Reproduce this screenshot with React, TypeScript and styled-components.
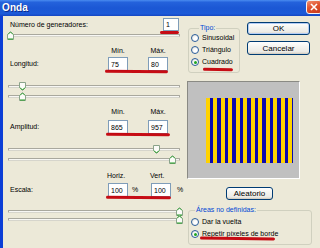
import React from "react";
import styled, { createGlobalStyle } from "styled-components";

const Global = createGlobalStyle`
  html, body { margin: 0; padding: 0; background: #ECE9D8; }
  body { font-family: "Liberation Sans", Arial, sans-serif; }
  * { box-sizing: border-box; }
`;

const Screen = styled.div`
  position: relative;
  width: 320px;
  height: 248px;
  overflow: hidden;
  display: flex;
  flex-direction: column;
  font-family: "Liberation Sans", Arial, sans-serif;
  font-size: 7px;
  color: #000;
  background: #ece9d8;
`;

const TitleBar = styled.div`
  flex: none;
  height: 16px;
  display: flex;
  align-items: flex-start;
  justify-content: space-between;
  padding-left: 2px;
  background: linear-gradient(180deg, #4a8cf0 0%, #2462dc 14%, #1b57d4 50%, #1c5ad8 85%, #1546c2 100%);
  color: #fff;
`;

const TitleText = styled.span`
  font-weight: bold;
  font-size: 10px;
  line-height: 15px;
  letter-spacing: 0.1px;
  text-shadow: 1px 1px 0 #0a2a8a;
`;

const CloseBtn = styled.div`
  width: 16px;
  height: 14px;
  margin-right: -2px;
  border: 1px solid #f4f4f4;
  border-radius: 3px;
  background: linear-gradient(160deg, #f09070 0%, #e0532e 45%, #c83a1c 100%);
  display: flex;
  align-items: center;
  justify-content: center;
`;

const Frame = styled.div`
  flex: 1;
  display: flex;
  border-left: 3px solid #0b3ed6;
  background: #ece9d8;
`;

const LeftCol = styled.div`
  width: 183px;
  flex: none;
  display: flex;
  flex-direction: column;
`;

const RightCol = styled.div`
  flex: 1;
  display: flex;
  flex-direction: column;
`;

const Label = styled.span`
  white-space: nowrap;
  line-height: 8px;
`;

const GenRow = styled.div`
  margin-top: 2px;
  width: 176px;
  height: 13px;
  padding-left: 7px;
  display: flex;
  align-items: center;
  justify-content: space-between;
`;

const Input = styled.div<{ $w: number }>`
  width: ${(p) => p.$w}px;
  height: 100%;
  background: #fff;
  border: 1px solid #7f9db9;
  padding-left: 2px;
  display: flex;
  align-items: center;
  font-size: 7px;
`;

const FieldGrid = styled.div<{ $cols: string; $mt: number; $h: number }>`
  margin-top: ${(p) => p.$mt}px;
  height: ${(p) => p.$h}px;
  display: grid;
  grid-template-columns: ${(p) => p.$cols};
  align-items: center;
`;

const HeadCell = styled.span<{ $align?: string }>`
  justify-self: ${(p) => p.$align || "center"};
  line-height: 8px;
  white-space: nowrap;
`;

const RowLabel = styled.span`
  padding-left: 7px;
  line-height: 8px;
`;

const SliderBox = styled.div<{ $h: number; $mt: number }>`
  position: relative;
  margin-top: ${(p) => p.$mt}px;
  margin-left: 5px;
  width: 172px;
  height: ${(p) => p.$h}px;
  display: flex;
  align-items: center;
`;

const Track = styled.div`
  flex: 1;
  height: 3px;
  border: 1px solid #a9a89e;
  border-bottom-color: #d6d5cc;
  background: #f7f7f4;
  border-radius: 1px;
`;

const ThumbWrap = styled.div`
  position: absolute;
  top: 50%;
  width: 7px;
  height: 9px;
  margin-top: -4.5px;
  margin-left: -3.5px;
  display: flex;
`;

const Thumb = ({ dir }: { dir: "up" | "down" }) => (
  <svg width="7" height="9" viewBox="0 0 7 9">
    {dir === "down" ? (
      <>
        <path d="M0.5 0.5H6.5V5.5L3.5 8.5L0.5 5.5Z" fill="#fbfbf8" stroke="#8aa38a" />
        <path d="M1 5.5L3.5 8L6 5.5" fill="none" stroke="#24a024" />
      </>
    ) : (
      <>
        <path d="M0.5 8.5H6.5V3.5L3.5 0.5L0.5 3.5Z" fill="#fbfbf8" stroke="#8aa38a" />
        <path d="M1 8H6" fill="none" stroke="#24a024" />
        <path d="M1 3.5L3.5 1L6 3.5" fill="none" stroke="#3da83d" />
      </>
    )}
  </svg>
);

const Slider = ({ h, mt, pos, dir }: { h: number; mt: number; pos: number; dir: "up" | "down" }) => (
  <SliderBox $h={h} $mt={mt}>
    <Track />
    <ThumbWrap style={{ left: pos }}>
      <Thumb dir={dir} />
    </ThumbWrap>
  </SliderBox>
);

const TopRow = styled.div`
  margin-top: 6px;
  display: flex;
  align-items: flex-start;
`;

const Group = styled.fieldset<{ $w: number; $ml: number; $mt: number }>`
  margin: ${(p) => p.$mt}px 0 0 ${(p) => p.$ml}px;
  width: ${(p) => p.$w}px;
  min-width: 0;
  padding: 0 3px 4px 2px;
  border: 1px solid #d0d0bf;
  border-radius: 3px;
  display: flex;
  flex-direction: column;
`;

const Legend = styled.legend<{ $ml: number }>`
  margin-left: ${(p) => p.$ml}px;
  padding: 0 1px;
  color: #0046d5;
  line-height: 8px;
  font-size: 7px;
  white-space: nowrap;
`;

const RadioRow = styled.div<{ $mt?: number }>`
  height: 12px;
  margin-top: ${(p) => p.$mt || 0}px;
  display: flex;
  align-items: center;
  gap: 3px;
  white-space: nowrap;
`;

const RadioDot = styled.span<{ $on?: boolean }>`
  flex: none;
  width: 8px;
  height: 8px;
  border-radius: 50%;
  border: 1px solid #2a5d9a;
  background: radial-gradient(circle at 65% 65%, #ffffff 30%, #dcdcd4 100%);
  display: flex;
  align-items: center;
  justify-content: center;
  &::after {
    content: "";
    display: ${(p) => (p.$on ? "block" : "none")};
    width: 3px;
    height: 3px;
    border-radius: 50%;
    background: #1fa51f;
  }
`;

const Radio = ({ on, children, mt }: { on?: boolean; children: React.ReactNode; mt?: number }) => (
  <RadioRow $mt={mt}>
    <RadioDot $on={on} />
    <Label>{children}</Label>
  </RadioRow>
);

const ButtonCol = styled.div`
  margin-left: 7px;
  display: flex;
  flex-direction: column;
  gap: 6px;
`;

const Button = styled.div<{ $w: number; $h: number; $default?: boolean }>`
  width: ${(p) => p.$w}px;
  height: ${(p) => p.$h}px;
  border: 1px solid #003c74;
  border-radius: 3px;
  background: linear-gradient(180deg, #ffffff 0%, #f4f4f0 40%, #ecebe6 80%, #d6d0c5 100%);
  box-shadow: ${(p) => (p.$default ? "inset 0 0 0 1px #b3ccf5" : "inset 0 -1px 0 #d6d0c5")};
  display: flex;
  align-items: center;
  justify-content: center;
  font-size: 8px;
`;

const Preview = styled.div`
  margin-top: 8px;
  margin-left: 1px;
  width: 113px;
  height: 98px;
  border: 1px solid;
  border-color: #8a8a84 #ffffff #ffffff #8a8a84;
  background: #c0c0c0;
  padding: 16px 0 0 18px;
`;

const Stripes = styled.div`
  width: 87px;
  height: 65px;
  background: repeating-linear-gradient(90deg, #ffd200 0px, #ffd200 4px, #0a0ab0 4px, #0a0ab0 7.5px);
`;

const RandRow = styled.div`
  margin-top: 8px;
  margin-left: 40px;
`;

const RedMark = styled.span<{ $x: number; $y: number; $w: number }>`
  position: absolute;
  left: ${(p) => p.$x}px;
  top: ${(p) => p.$y}px;
  width: ${(p) => p.$w}px;
  height: 3px;
  border-radius: 2px;
  background: #c4000a;
  transform: rotate(0.6deg);
  opacity: 0.95;
`;

export default function App() {
  return (
    <Screen>
      <Global />
      <TitleBar>
        <TitleText>Onda</TitleText>
        <CloseBtn>
          <svg width="8" height="8" viewBox="0 0 8 8">
            <path d="M1 1L7 7M7 1L1 7" stroke="#fff" strokeWidth="1.6" />
          </svg>
        </CloseBtn>
      </TitleBar>
      <Frame>
        <LeftCol>
          <GenRow>
            <Label>Número de generadores:</Label>
            <Input $w={16}>1</Input>
          </GenRow>
          <Slider h={8} mt={0} pos={2} dir="up" />

          <FieldGrid $cols="105px 20px 20px 20px" $mt={8} $h={8}>
            <span />
            <HeadCell>Mín.</HeadCell>
            <span />
            <HeadCell>Máx.</HeadCell>
          </FieldGrid>
          <FieldGrid $cols="105px 20px 20px 20px" $mt={2} $h={14}>
            <RowLabel>Longitud:</RowLabel>
            <Input $w={20}>75</Input>
            <span />
            <Input $w={20}>80</Input>
          </FieldGrid>
          <Slider h={10} mt={10} pos={14} dir="down" />
          <Slider h={10} mt={0} pos={14} dir="up" />

          <FieldGrid $cols="105px 20px 20px 20px" $mt={7} $h={8}>
            <span />
            <HeadCell>Mín.</HeadCell>
            <span />
            <HeadCell>Máx.</HeadCell>
          </FieldGrid>
          <FieldGrid $cols="105px 20px 20px 20px" $mt={4} $h={14}>
            <RowLabel>Amplitud:</RowLabel>
            <Input $w={20}>865</Input>
            <span />
            <Input $w={20}>957</Input>
          </FieldGrid>
          <Slider h={10} mt={10} pos={148} dir="down" />
          <Slider h={10} mt={0} pos={164} dir="up" />

          <FieldGrid $cols="104px 24px 19px 24px" $mt={8} $h={8}>
            <span />
            <HeadCell $align="start">Horiz.</HeadCell>
            <span />
            <HeadCell $align="start">Vert.</HeadCell>
          </FieldGrid>
          <FieldGrid $cols="105px 20px 4px 7px 12px 20px 6px 7px" $mt={3} $h={14}>
            <RowLabel>Escala:</RowLabel>
            <Input $w={20}>100</Input>
            <span />
            <Label>%</Label>
            <span />
            <Input $w={20}>100</Input>
            <span />
            <Label>%</Label>
          </FieldGrid>
          <Slider h={8} mt={10} pos={171} dir="up" />
          <Slider h={8} mt={0} pos={171} dir="up" />
        </LeftCol>

        <RightCol>
          <TopRow>
            <Group $w={52} $ml={2} $mt={2}>
              <Legend $ml={8}>Tipo:</Legend>
              <Radio>Sinusoidal</Radio>
              <Radio>Triángulo</Radio>
              <Radio on>Cuadrado</Radio>
            </Group>
            <ButtonCol>
              <Button $w={63} $h={13} $default>OK</Button>
              <Button $w={63} $h={14}>Cancelar</Button>
            </ButtonCol>
          </TopRow>
          <Preview>
            <Stripes />
          </Preview>
          <RandRow>
            <Button $w={47} $h={13}>Aleatorio</Button>
          </RandRow>
          <Group $w={124} $ml={2} $mt={6}>
            <Legend $ml={4}>Áreas no definidas:</Legend>
            <Radio mt={2}>Dar la vuelta</Radio>
            <Radio on>Repetir píxeles de borde</Radio>
          </Group>
        </RightCol>
      </Frame>

      <RedMark $x={160} $y={31} $w={19} />
      <RedMark $x={105} $y={70} $w={63} />
      <RedMark $x={106} $y={133} $w={64} />
      <RedMark $x={106} $y={196} $w={65} />
      <RedMark $x={203} $y={68} $w={30} />
      <RedMark $x={200} $y={237} $w={75} />
    </Screen>
  );
}
